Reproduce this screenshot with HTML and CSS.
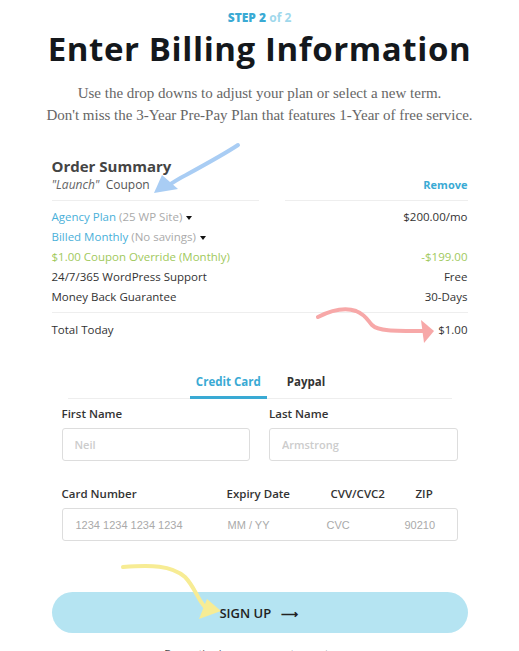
FILE: index.html
```html
<!DOCTYPE html>
<html lang="en">
<head>
    <meta charset="UTF-8">
    <meta name="viewport" content="width=device-width, initial-scale=1.0">
    <title>Enter Billing Information</title>
    <link rel="stylesheet" href="styles.css">
</head>
<body>
    <div class="page">
        <div class="step"><strong>STEP 2</strong> <span>of 2</span></div>
        <h1>Enter Billing Information</h1>
        <p class="intro">Use the drop downs to adjust your plan or select a new term.<br>Don't miss the 3-Year Pre-Pay Plan that features 1-Year of free service.</p>

        <div class="summary">
            <h2>Order Summary</h2>
            <div class="coupon">
                <span><em>"Launch"</em>&nbsp; Coupon</span>
                <a href="#" class="remove">Remove</a>
            </div>
            <div class="split-line"><span></span><span></span></div>

            <div class="row">
                <span><span class="plan">Agency Plan</span> <span class="muted">(25 WP Site)</span> <i class="caret"></i></span>
                <span>$200.00/mo</span>
            </div>
            <div class="row">
                <span><span class="plan">Billed Monthly</span> <span class="muted">(No savings)</span> <i class="caret"></i></span>
                <span></span>
            </div>
            <div class="row green">
                <span>$1.00 Coupon Override (Monthly)</span>
                <span>-$199.00</span>
            </div>
            <div class="row">
                <span>24/7/365 WordPress Support</span>
                <span>Free</span>
            </div>
            <div class="row">
                <span>Money Back Guarantee</span>
                <span>30-Days</span>
            </div>
            <div class="row total">
                <span>Total Today</span>
                <span>$1.00</span>
            </div>
        </div>

        <div class="payment">
            <div class="tabs">
                <a href="#" class="tab active">Credit Card</a>
                <a href="#" class="tab">Paypal</a>
            </div>

            <div class="name-fields">
                <label class="field">
                    <span class="label">First Name</span>
                    <input type="text" placeholder="Neil">
                </label>
                <label class="field">
                    <span class="label">Last Name</span>
                    <input type="text" placeholder="Armstrong">
                </label>
            </div>

            <div class="card-labels">
                <span class="c-num">Card Number</span>
                <span class="c-exp">Expiry Date</span>
                <span class="c-cvc">CVV/CVC2</span>
                <span class="c-zip">ZIP</span>
            </div>
            <div class="card-box">
                <span class="c-num">1234 1234 1234 1234</span>
                <span class="c-exp">MM / YY</span>
                <span class="c-cvc">CVC</span>
                <span class="c-zip">90210</span>
            </div>
        </div>

        <button class="signup">SIGN UP <span class="arrow">&#10230;</span></button>
        <p class="terms">By continuing you agree to our terms</p>

        <!-- hand drawn annotations -->
        <svg class="mark mark-blue" width="100" height="60" viewBox="0 0 100 60">
            <path d="M92 4 C80 12 62 22 40 34 C32 38 26 42 20 46" fill="none" stroke="#a9cdf4" stroke-width="4" stroke-linecap="round"/>
            <polygon points="8,52 16,34 32,48" fill="#a9cdf4"/>
        </svg>
        <svg class="mark mark-red" width="140" height="40" viewBox="0 0 140 40">
            <path d="M2 12 C14 6 28 2 40 6 C50 10 52 16 56 20 C62 26 76 26 108 26" fill="none" stroke="#f7a8a8" stroke-width="4" stroke-linecap="round"/>
            <polygon points="105,15 118,26 108,38" fill="#f7a8a8"/>
        </svg>
        <svg class="mark mark-yellow" width="110" height="60" viewBox="0 0 110 60">
            <path d="M2 4 C30 2 50 2 64 14 C74 24 78 40 86 46" fill="none" stroke="#f7ec94" stroke-width="4" stroke-linecap="round"/>
            <polygon points="78,56 86,36 100,48" fill="#f7ec94"/>
        </svg>
    </div>
</body>
</html>
```

FILE: styles.css
```css
body {
    margin: 0;
    background-color: #fff;
    font-family: "Open Sans", Arial, sans-serif;
    color: #444;
}
.page {
    position: relative;
    width: 416px;
    margin: 0 auto;
    padding-top: 10px;
}
.step {
    text-align: center;
    font-size: 12px;
    line-height: 16px;
    font-weight: 700;
    color: #3aaad4;
}
.step span {
    color: #9fd8ec;
}
h1 {
    margin: 0 -20px;
    text-align: center;
    font-size: 33px;
    line-height: 45px;
    font-weight: 700;
    letter-spacing: 0.6px;
    color: #14181c;
    white-space: nowrap;
}
.intro {
    margin: 11px -30px 0;
    text-align: center;
    font-family: "Liberation Serif", serif;
    font-size: 15px;
    line-height: 22px;
    color: #666;
}
.summary {
    margin-top: 31px;
    font-size: 11.5px;
}
.summary h2 {
    margin: 0;
    font-size: 15px;
    line-height: 18px;
    font-weight: 700;
    color: #444;
}
.coupon {
    display: flex;
    justify-content: space-between;
    font-size: 12px;
    line-height: 16px;
    color: #555;
    margin-top: 2px;
}
.coupon em {
    color: #666;
}
.remove {
    font-size: 11px;
    color: #3aaad4;
    font-weight: 700;
    text-decoration: none;
}
.split-line {
    display: flex;
    justify-content: space-between;
    margin: 7px 0 6px;
}
.split-line span {
    width: 207px;
    border-top: 1px solid #eee;
}
.split-line span + span {
    width: 183px;
}
.row {
    display: flex;
    justify-content: space-between;
    line-height: 20px;
    color: #333;
}
.plan {
    color: #4ab0d9;
}
.muted {
    color: #aaa;
}
.caret {
    display: inline-block;
    border-left: 3.5px solid transparent;
    border-right: 3.5px solid transparent;
    border-top: 4px solid #111;
    vertical-align: middle;
    margin-left: 1px;
}
.green {
    color: #9fc95c;
}
.total {
    border-top: 1px solid #eee;
    margin-top: 5px;
    padding-top: 7px;
}
.payment {
    margin: 32px 10px 0;
    font-size: 11.5px;
}
.tabs {
    display: flex;
    justify-content: center;
    gap: 14px;
    margin: 0 6px;
    border-bottom: 1px solid #eee;
    padding-left: 2px;
}
.tab {
    font-weight: 700;
    color: #333;
    text-decoration: none;
    line-height: 20px;
    padding: 0 6px 4px;
    border-bottom: 3px solid transparent;
    margin-bottom: -1px;
}
.tab.active {
    color: #3aaad4;
    border-bottom-color: #3aaad4;
}
.name-fields {
    display: flex;
    gap: 19px;
    margin-top: 7px;
}
.field {
    flex: 1;
    display: flex;
    flex-direction: column;
}
.label {
    font-weight: 600;
    color: #333;
    line-height: 16px;
    margin-bottom: 6px;
}
.field input {
    height: 33px;
    box-sizing: border-box;
    border: 1px solid #ddd;
    border-radius: 3px;
    padding: 0 12px;
    font-family: "Open Sans", Arial, sans-serif;
    font-size: 11px;
    font-weight: 600;
}
.field input::placeholder {
    color: #ccc;
}
.card-labels,
.card-box {
    display: flex;
    align-items: center;
}
.card-labels {
    margin-top: 25px;
    line-height: 16px;
    font-weight: 600;
    color: #333;
}
.card-box {
    margin-top: 6px;
    height: 33px;
    box-sizing: border-box;
    border: 1px solid #ddd;
    border-radius: 3px;
    font-family: "Liberation Sans", Arial, sans-serif;
    font-size: 11px;
    color: #aaa;
}
.c-num { width: 165px; }
.c-exp { width: 104px; }
.c-cvc { width: 85px; }
.card-box .c-num { width: 152px; padding-left: 13px; }
.card-box .c-exp { width: 99px; }
.card-box .c-cvc { width: 78px; }
.signup {
    display: block;
    width: 100%;
    height: 41px;
    margin-top: 51px;
    border: none;
    border-radius: 21px;
    background-color: #b5e4f2;
    font-family: "Open Sans", Arial, sans-serif;
    font-size: 13px;
    font-weight: 600;
    color: #222;
    padding-right: 8px;
}
.arrow {
    margin-left: 6px;
    font-size: 12px;
}
.terms {
    margin: 13px 0 0;
    text-align: center;
    font-size: 11px;
    color: #444;
}
.mark {
    position: absolute;
}
.mark-blue {
    left: 94px;
    top: 141px;
}
.mark-red {
    left: 264px;
    top: 305px;
}
.mark-yellow {
    left: 69px;
    top: 563px;
}
```
